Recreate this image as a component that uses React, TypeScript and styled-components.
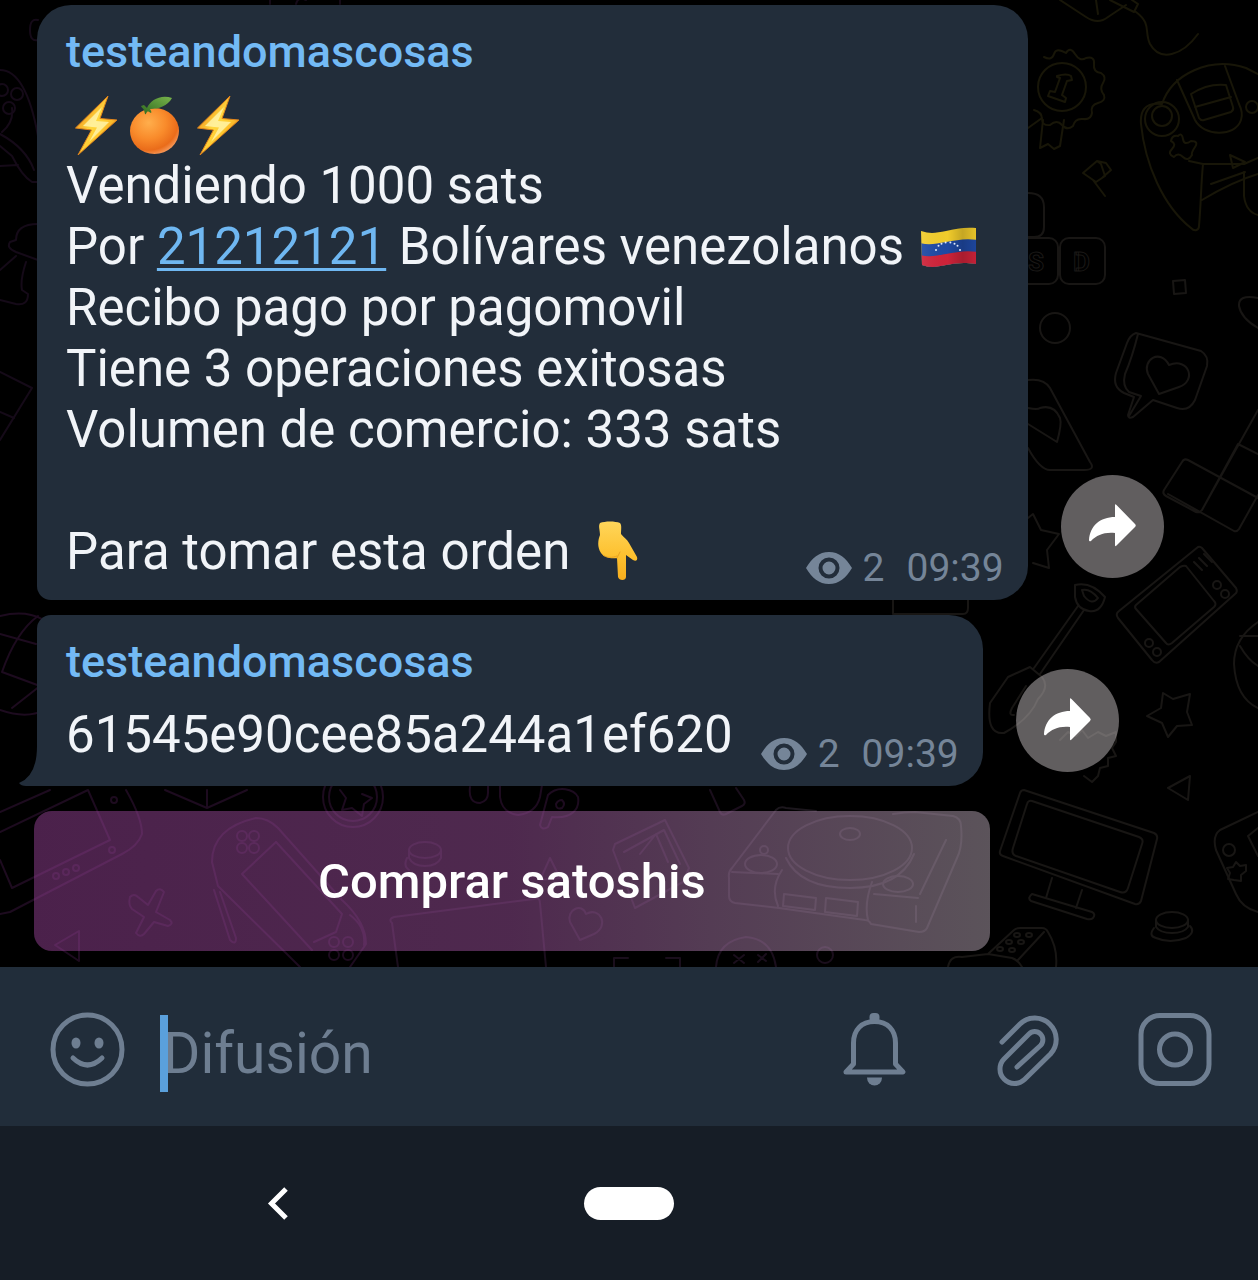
import React from "react";
import styled, { createGlobalStyle, css } from "styled-components";

const color = {
  bubble: "#222d3a",
  text: "#f1f4f8",
  name: "#73baf5",
  link: "#6fb7f1",
  muted: "#758598",
  icon: "#6e7e91",
  composer: "#212d3a",
  caret: "#5aa0dc",
  nav: "#161d26",
};

const GlobalStyle = createGlobalStyle`
  * { box-sizing: border-box; }
  body {
    margin: 0;
    background: #000;
    font-family: Roboto, "Noto Sans", sans-serif;
    color: ${color.text};
  }
  button, input { font: inherit; color: inherit; }
`;

const Screen = styled.div`
  min-height: 100vh;
  display: flex;
  flex-direction: column;
  background: #000;
`;

const Chat = styled.main`
  position: relative;
  flex: 1;
  display: flex;
  flex-direction: column;
  justify-content: flex-end;
  padding: 5px 34px 16px;
  overflow: hidden;
`;

const WallpaperArt = styled.svg`
  position: absolute;
  left: 0;
  bottom: 0;
  width: 1258px;
  height: 967px;
  fill: none;
  stroke-width: 2;
  stroke-linejoin: round;
  stroke-linecap: round;
  pointer-events: none;
`;

const MessageRow = styled.div<{ $gap: number }>`
  position: relative;
  display: flex;
  align-items: flex-end;
  gap: 33px;
  padding-left: 3px;
  margin-bottom: ${(p) => p.$gap}px;
`;

const Bubble = styled.article<{ $tail?: boolean }>`
  position: relative;
  padding: 20px 24px 10px 29px;
  background: ${color.bubble};
  border-radius: 34px 34px 34px 14px;
  ${(p) =>
    p.$tail &&
    css`
      border-radius: 14px 34px 34px 0;
    `}
`;

const Tail = styled.svg`
  position: absolute;
  left: -18px;
  bottom: 0;
  width: 20px;
  height: 40px;
  fill: ${color.bubble};
`;

const Sender = styled.h2`
  margin: 0 0 15px;
  font-size: 45px;
  line-height: 54px;
  font-weight: 500;
  color: ${color.name};
`;

const Line = styled.p`
  margin: 0;
  min-height: 61px;
  padding-right: 26px;
  font-size: 51px;
  line-height: 61px;
  white-space: pre-wrap;
`;

const LastRow = styled.div`
  display: flex;
  justify-content: space-between;
  align-items: flex-end;
  gap: 8px;
`;

const LastLine = styled(Line)<{ $below: number }>`
  padding-right: 20px;
  margin-bottom: ${(p) => p.$below}px;
`;

const Amount = styled.a`
  color: ${color.link};
  text-decoration: underline;
  text-decoration-thickness: 3px;
  text-underline-offset: 4px;
  text-decoration-skip-ink: none;
`;

const Meta = styled.div`
  display: flex;
  align-items: center;
  font-size: 39px;
  line-height: 44px;
  color: ${color.muted};
`;

const Views = styled.span`
  margin: 0 22px 0 11px;
`;

const EyeArt = styled.svg`
  width: 46px;
  height: 32px;
  fill: ${color.muted};
`;

const EmojiArt = styled.svg`
  display: inline-block;
  width: 61px;
  height: 61px;
  vertical-align: top;
`;

const ShareButton = styled.button<{ $lift: number }>`
  flex: none;
  width: 103px;
  height: 103px;
  margin: 0 0 ${(p) => p.$lift}px;
  padding: 0;
  border: 0;
  border-radius: 50%;
  background: rgba(194, 188, 190, 0.5);
  cursor: pointer;

  svg {
    display: block;
    fill: #fff;
  }
`;

const KeyboardButton = styled.button`
  position: relative;
  width: 80.3%;
  height: 140px;
  border: 0;
  border-radius: 18px;
  font-size: 49px;
  font-weight: 500;
  color: #fff;
  background: linear-gradient(
    90deg,
    rgba(150, 66, 150, 0.5) 0%,
    rgba(156, 82, 156, 0.5) 50%,
    rgba(168, 122, 168, 0.5) 72%,
    rgba(182, 166, 180, 0.5) 100%
  );
  cursor: pointer;
`;

const Composer = styled.form`
  display: flex;
  align-items: center;
  height: 159px;
  padding: 10px 46px 0 50px;
  background: ${color.composer};
`;

const Tools = styled.div`
  display: flex;
  align-items: center;
  gap: 78px;
`;

const IconButton = styled.button`
  flex: none;
  display: block;
  padding: 0;
  margin-bottom: 4px;
  border: 0;
  background: none;
  cursor: pointer;

  svg {
    display: block;
    fill: none;
    stroke: ${color.icon};
    stroke-width: 5;
    stroke-linecap: round;
    stroke-linejoin: round;
  }
`;

const Field = styled.label`
  position: relative;
  flex: 1;
  min-width: 0;
  display: flex;
  margin: 4px 0 0 38px;
`;

const Caret = styled.span`
  position: absolute;
  left: -3px;
  top: 0;
  width: 8px;
  height: 77px;
  background: ${color.caret};
`;

const TextInput = styled.input`
  width: 100%;
  height: 77px;
  padding: 0;
  border: 0;
  outline: 0;
  background: none;
  font-size: 57px;
  caret-color: transparent;

  &::placeholder {
    color: ${color.icon};
    opacity: 1;
  }
`;

const SystemNav = styled.nav`
  display: grid;
  grid-template-columns: repeat(3, 1fr);
  place-items: center;
  height: 154px;
  padding: 0 8%;
  background: ${color.nav};
`;

const NavButton = styled.button`
  display: block;
  padding: 0;
  border: 0;
  background: none;
  cursor: pointer;

  svg {
    display: block;
  }
`;

const HomePill = styled(NavButton)`
  width: 90px;
  height: 33px;
  border-radius: 17px;
  background: #fff;
`;

function Bolt() {
  return (
    <EmojiArt viewBox="0 0 61 61" role="img" aria-label="rayo">
      <defs>
        <linearGradient id="bolt" x1="0" y1="0" x2="1" y2="1">
          <stop offset="0.2" stopColor="#f0951c" />
          <stop offset="0.45" stopColor="#ffd83f" />
          <stop offset="0.6" stopColor="#ffc930" />
          <stop offset="0.85" stopColor="#ea8318" />
        </linearGradient>
      </defs>
      <path d="M42 2 9.500 34 25.500 36 12 61 51 26 34 24.500z" fill="url(#bolt)" stroke="#e0841c" strokeWidth="1" />
      <path d="M36 13 17 32 31 33.500 23 48 43 28 30 27z" fill="#fff6b0" opacity="0.8" />
    </EmojiArt>
  );
}

function Tangerine() {
  return (
    <EmojiArt viewBox="0 0 61 61" role="img" aria-label="mandarina">
      <defs>
        <radialGradient id="peel" cx="0.38" cy="0.32" r="0.7">
          <stop offset="0" stopColor="#ffae4c" />
          <stop offset="0.5" stopColor="#f98b2b" />
          <stop offset="0.85" stopColor="#ea6c1a" />
          <stop offset="1" stopColor="#f49352" />
        </radialGradient>
        <linearGradient id="leaf" x1="0" y1="1" x2="1" y2="0">
          <stop offset="0" stopColor="#2f6a1e" />
          <stop offset="1" stopColor="#79b44c" />
        </linearGradient>
      </defs>
      <ellipse cx="27.500" cy="37" rx="24.500" ry="23" fill="url(#peel)" />
      <path d="M17 16c-1-2-3-3-3-4l3-1 3 3c3-8 14-14 25-10-4 8-14 11-22 11 1 2 2 3 1 4-2-1-3-2-4-1s-1 3-2 2z" fill="url(#leaf)" />
    </EmojiArt>
  );
}

function Flag() {
  const stars = [-12, -9.5, -6.5, -2.4, 2.4, 6.5, 9.5, 12];
  return (
    <EmojiArt viewBox="0 0 61 61" role="img" aria-label="bandera de Venezuela">
      <defs>
        <clipPath id="cloth">
          <path d="M4 15c9 3 15 2 25 0s18-4 30-3v36c-12-2-20-1-30 1s-16 3-24 0z" />
        </clipPath>
        <linearGradient id="fold" x1="0" x2="1">
          <stop offset="0" stopColor="#fff" stopOpacity="0.1" />
          <stop offset="0.5" stopColor="#000" stopOpacity="0.02" />
          <stop offset="0.75" stopColor="#000" stopOpacity="0.2" />
          <stop offset="1" stopColor="#000" stopOpacity="0.05" />
        </linearGradient>
      </defs>
      <g clipPath="url(#cloth)">
        <path d="M0 8h61v44H0z" fill="#f6d02c" />
        <path d="M0 26c10 4 18 2 29 0s20-4 32-2v30H0z" fill="#1f4aa6" />
        <path d="M0 38c10 4 18 2 29 0s20-4 32-2v20H0z" fill="#d2233a" />
        <path d="M0 8h61v44H0z" fill="url(#fold)" />
      </g>
      <g fill="#dfe8f8">
        {stars.map((x) => (
          <circle key={x} cx={31 + x} cy={36 - Math.sqrt(150 - x * x) * 0.8} r="1" />
        ))}
      </g>
    </EmojiArt>
  );
}

function PointDown() {
  return (
    <EmojiArt viewBox="0 0 61 61" role="img" aria-label="mano apuntando abajo">
      <defs>
        <linearGradient id="skin" x1="0" y1="0" x2="0" y2="1">
          <stop offset="0" stopColor="#ffd65a" />
          <stop offset="0.6" stopColor="#fdc02e" />
          <stop offset="1" stopColor="#f6ad1e" />
        </linearGradient>
      </defs>
      <path
        d="M17 2c5-2 15-2 20 0 2 2 1 7 1 11 3 4 6 5 8 9l8 14c1 3-1 5-4 3l-7-5v22c0 4-7 4-8 0l-1-19c-7 1-13-1-16-5-4-6-3-13-1-18 0-5-2-9 0-12z"
        fill="url(#skin)"
      />
      <path d="M20 34c3 3 9 3 14 1M34 37l3-6" fill="none" stroke="#e9a422" strokeWidth="1" strokeLinecap="round" />
    </EmojiArt>
  );
}

function MessageMeta() {
  return (
    <Meta>
      <EyeArt viewBox="0 0 46 32" role="img" aria-label="Vistas">
        <path
          fillRule="evenodd"
          d="M0 16C6 6 13 0 23 0s17 6 23 16c-6 10-13 16-23 16S6 26 0 16zM23 5.500a10.500 10.500 0 1 0 0 21 10.500 10.500 0 0 0 0-21zM23 9.500a6.500 6.500 0 1 1 0 13 6.500 6.500 0 0 1 0-13z"
        />
      </EyeArt>
      <Views>2</Views>
      <time dateTime="09:39">09:39</time>
    </Meta>
  );
}

function Share({ lift }: { lift: number }) {
  return (
    <ShareButton type="button" aria-label="Compartir" $lift={lift}>
      <svg width="103" height="103" viewBox="0 0 103 103">
        <path d="M54 30.500q0-2 1.500-.5L74 49q1.500 1.500 0 3L55.500 70.500q-1.500 1.500-1.500-.5V58c-11-1-18 2-24 8q-2 1-2-1c1-14 11-23 26-23z" />
      </svg>
    </ShareButton>
  );
}

function Wallpaper() {
  return (
    <WallpaperArt viewBox="0 0 1258 967" aria-hidden="true">
      <g stroke="#181608">
        <path d="M1060 0l26 17q12 8 22 0l18-12M1096 0l2 14M1110 0l24 12 4-8-6-4M1136 12c16 12 8 20 14 32 10 18 32 12 48-10" />
        <path d="M1044 57q8 4 10-3t12-1q4-7 9 1t11 4q9-2 8 6t7 9q6 4 2 10t1 12q2 6-6 8t-6 10q-1 7-9 6t-10 7q-6 5-11-1t-12 0q-8 1-8-6t-8-9" />
        <circle cx="1062" cy="87" r="24" />
        <path d="M1057 76q10-3 14 0l1 4-5 1-5 14 4 3-1 4-17-6 2-5 5 1 5-14-3-1zM1043 120l-3 28 8-4 6 5 6-3 4-26M1028 128l14-10" />
        <path d="M1083 173l14-12 4 3 4 12-9 6zM1097 161l9 2 5 7-8 7M1093 180l12 16" />
        <path d="M1162 104c10-30 48-48 84-36l12 6M1162 104c-18-2-22 8-21 20 4 40 22 82 50 104 4 4 8 2 8-2 2-22 2-42 4-62l-14-3M1204 164l40 0 14-6M1202 200c20-12 36-20 56-26M1211 184l34-12" />
        <circle cx="1162" cy="119" r="17" />
        <circle cx="1162" cy="116" r="10" />
        <path d="M1177 80l18 40c8 16 40 18 46 0 2-6 0-12-2-16l-14-38M1191 94l8 24q2 3 5 2l27-8q3-2 2-5l-7-22q-18-2-35 9zM1195 107l36-10" />
        <path d="M1178 136q4-4 5 3t8 2q8 0 4 6t-3 8q-4 7-9 2t-9 0q-7-3-2-8t-1-8q1-6 7-5zM1230 155l3 13 12-6zM1244 172v24q2 16 14 19" />
        <circle cx="1252" cy="107" r="6" />
      </g>
      <g stroke="#181614">
        <path d="M1028 193q16 0 16 14v20q0 10-10 10h-6" />
        <rect x="1014" y="238" width="44" height="46" rx="9" />
        <rect x="1060" y="238" width="45" height="46" rx="9" />
        <path d="M1173 281l12-1 1 13-12 1zM1258 298q-20-4-19 8 2 12 19 22" />
        <circle cx="1055" cy="328" r="15" />
        <path d="M1136 333q-6 2-9 10l-11 30q-4 14 8 20l10 4-6 18q0 4 5 2l20-17 24 8q12 4 18-8l12-34q2-10-6-15zM1138 334q-6 24-13 40-3 12 4 18l12 4-12 20" />
        <path d="M1159 394l-11-20c-6-14 12-26 21-9 20-8 28 16 10 22z" />
        <path d="M1028 380q16-2 22 8l40 74q6 8-6 8h-34q-10 0-22-22M1028 408q10 2 12 0 14-4 20 10 2 6-3 24l-29-18" />
        <path d="M1258 410l-56 100q-2 3-6 2l-30-16q-4-2-2-6l18-28q2-4 6-2l70 38M1238 444l20 10M1202 510l36-66M1168 494l66 37q3 1 5-2l19-34" />
        <path d="M1028 518l5-4 8 16 18 4-12 16 2 18-16-5" />
        <path d="M1075 585q16-4 30 12-4 16-16 14t-14-14zM1082 590q8-2 16 8-6 8-14-2zM1084 610l-44 64M1078 606l-44 62M1030 667l12 10q8 10-4 22-8 20-34 34-18 2-14-30l18-26zM1026 686l-14 22q-4 8 2 7" />
        <path d="M1198 547q2-1 4 1l34 40q2 4-1 6l-76 68q-4 2-7-2l-34-42q-3-4 1-7zM1186 566q-2-1-6 1l-44 38q-2 2 0 4l30 34q2 3 6 0l42-36q3-3 0-6z" />
        <circle cx="1217" cy="585" r="4" />
        <circle cx="1225" cy="594" r="4" />
        <circle cx="1149" cy="643" r="4" />
        <circle cx="1157" cy="652" r="4" />
        <path d="M1194 562l8 8M1199 558l8 8M1204 554l8 8M1258 622q-24 16-24 42 2 34 24 44M1240 636h18M1240 646q8 14 18 20" />
        <path d="M1163 693l10 6 17-5-3 18 5 13-15 1-9 11-6-14-15-7 14-8zM1190 776l-22 12 20 12z" />
        <path d="M1060 740l8-8 8 4 6-6 6 8 10-6 8 4 10-4 0 10-4 6 4 8-8 2 0 8-8 2-2 8-6 6-8-6" />
        <path d="M1024 790q-3 0-4 3l-20 58q-1 4 3 5l132 48q4 1 6-3l16-62q1-4-3-6zM1032 801q-4-1-5 3l-14 44q-2 6 3 8l104 36q6 2 8-4l14-44q2-5-3-7zM1052 878l-6 20M1082 890l-6 18M1032 894l60 18q4 2 1 6-2 2-6 1l-56-18q-4-3 1-7z" />
        <path d="M1258 812l-38 18q-8 6-4 20l20 44q6 14 22 18M1258 828l-10 8 10 20" />
        <circle cx="1229" cy="850" r="6" />
        <path d="M1236 862l4 4 6-1 0 6-5 4 0 6-7-1-6-1 2-6-3-5 6-1z" />
        <ellipse cx="1172" cy="920" rx="16" ry="8" />
        <path d="M1156 920v7q4 6 16 6t16-6v-7M1154 928q-6 8 2 10 14 6 30 0 10-6 4-12" />
        <path d="M988 954l26-24q2-2 6-2h22q4 0 6 4 10 16 8 35M988 954l24 4q6 2 10 9M948 967q2-12 14-10l26-3M1018 960l26-28" />
        <ellipse cx="1017" cy="935" rx="3" ry="2" />
        <ellipse cx="1029" cy="935" rx="3" ry="2" />
        <ellipse cx="1009" cy="942" rx="3" ry="2" />
        <ellipse cx="1021" cy="942" rx="3" ry="2" />
        <ellipse cx="1000" cy="949" rx="3" ry="2" />
        <ellipse cx="1012" cy="950" rx="3" ry="2" />
        <path d="M893 600v14h70q5 0 5-6v-8" />
      </g>
      <g stroke="#1c171d">
        <path d="M776 810q4-4 10-2l30 3M776 810l-44 58q-4 4-3 10v18q0 6 6 7l44 5 86 12q4 0 6 4l48 8q6 0 8-4l30-70q6-12 4-32 0-8-8-10l-38-4q-10 0-22 2M732 872l46 2M778 906q-8-18 4-36M868 920q-4-16 4-38M874 894l44 4M916 922v-16M946 840l-26 54" />
        <ellipse cx="850" cy="848" rx="62" ry="32" />
        <path d="M786 858q14 30 64 30t64-34" />
        <ellipse cx="850" cy="834" rx="10" ry="6" />
        <ellipse cx="761" cy="864" rx="16" ry="9" />
        <ellipse cx="898" cy="884" rx="15" ry="8" />
        <circle cx="764" cy="850" r="4" />
        <path d="M784 894l32 4-1 12-32-4zM826 898l32 4-1 14-32-4z" />
      </g>
      <g stroke="#1a0e1c">
        <path d="M710 790l10 22q2 4 6 2l16-8q4-2 2-6l-8-12M613 850l2-6 50-24 24 48-6 14-48 26zM624 852l40-22 16 34M640 854l16-20 12 28" />
        <path d="M580 940l-10-18c-4-12 12-20 16-8 14-8 24 12 8 20z" />
        <path d="M392 923q-4-4 2-6l140-18q6-2 6 4l6 64M392 923l6 44M614 967v-9h14M666 958h14v9" />
        <path d="M716 967q2-26 30-30 26 2 30 30M734 955l10 8M744 955l-10 8M758 955l8 6M766 954l-8 8" />
        <circle cx="825" cy="955" r="8" />
        <ellipse cx="425" cy="850" rx="16" ry="8" />
        <path d="M409 850v8q4 8 16 8t16-8v-8M407 858q-4 8 2 12M550 858l10 20-20 2z" />
      </g>
      <g stroke="#1d0b1f">
        <circle cx="353" cy="797" r="30" />
        <circle cx="353" cy="797" r="24" />
        <path d="M340 790l6 8-4 12 10-2 10 8 2-12 8-6-10-4M165 790l42 18 40-18M207 790v18" />
        <path d="M470 787q-2 16 10 16 8-2 8-10v-8M500 785v12q2 16 18 18 18-2 22-18l2-12M548 795l-8 30q2 6 8 2l4-10c20 2 28-8 26-20-4-8-20-12-30-2zM562 800q4 4 0 8-6 2-6-4 2-4 6-4z" />
        <path d="M212 862q0-34 44-44 12 0 22 10l64 72q24 22 24 44l-16 23M212 862l6 24 82 81M276 842l-34 32 70 76M276 842l66 72-6 18-22 10M214 890l16 50q6 6 6-2l-16-46M350 915q16 12 14 30" />
        <circle cx="242" cy="836" r="5" />
        <circle cx="254" cy="836" r="5" />
        <circle cx="242" cy="848" r="5" />
        <circle cx="254" cy="848" r="5" />
        <circle cx="334" cy="942" r="5" />
        <circle cx="348" cy="942" r="5" />
        <circle cx="334" cy="955" r="5" />
        <circle cx="348" cy="955" r="5" />
        <path d="M130 897q4-4 8 0l10 8 8-14q4-4 8 1l-8 20 14 8q4 4-2 6l-14-4-10 12q-4 4-8-1l8-16-12-8q-4-4-2-12zM55 945l24-14v30z" />
        <path d="M0 832l88-42 22 50L12 888 0 860M0 812l50-22M126 790q16 28 16 44-4 12-20 20L10 912l-10 2" />
        <circle cx="114" cy="800" r="3" />
        <circle cx="112" cy="850" r="3" />
        <circle cx="56" cy="876" r="3" />
        <circle cx="66" cy="872" r="3" />
        <circle cx="76" cy="868" r="3" />
        <path d="M0 616q40-10 60 20v60q-20 28-60 14M0 634l36 10M12 708l28-22-38-14q14-40 36-56" />
      </g>
      <g stroke="#150a18">
        <path d="M0 70q26 0 38 66M2 132q12-10 10-24M0 134q26 14 34 36M0 146l12 10q10 20 20 26h8M0 166l18-1M38 224q-22 0-22 16l-6 2q-4 6 6 10l22 8M0 270l16-14M26 262q-6 18-4 28l6 4q0 12-12 10L0 300" />
        <circle cx="17" cy="94" r="6" />
        <circle cx="9" cy="108" r="6" />
        <circle cx="2" cy="90" r="6" />
        <path d="M0 372l32 16L0 440M0 412l14 6M38 20q-8-2-8 10t8 10M270 0v4M296 4q2-8 10-4M340 0v4" />
      </g>
      <g fontFamily="Roboto, sans-serif" fontWeight="700" fontSize="26" stroke="#1b1917" strokeWidth="1">
        <text x="1028" y="271">S</text>
        <text x="1073" y="271">D</text>
      </g>
    </WallpaperArt>
  );
}

export default function App() {
  return (
    <Screen>
      <GlobalStyle />
      <Chat>
        <Wallpaper />
        <MessageRow $gap={15}>
          <Bubble>
            <Sender>testeandomascosas</Sender>
            <Line>
              <Bolt />
              <Tangerine />
              <Bolt />
            </Line>
            <Line>Vendiendo 1000 sats</Line>
            <Line>
              Por <Amount href="#21212121">21212121</Amount> Bolívares venezolanos <Flag />
            </Line>
            <Line>Recibo pago por pagomovil</Line>
            <Line>Tiene 3 operaciones exitosas</Line>
            <Line>Volumen de comercio: 333 sats</Line>
            <Line />
            <LastRow>
              <LastLine $below={8}>
                Para tomar esta orden <PointDown />
              </LastLine>
              <MessageMeta />
            </LastRow>
          </Bubble>
          <Share lift={22} />
        </MessageRow>
        <MessageRow $gap={25}>
          <Bubble $tail>
            <Tail viewBox="0 0 20 40" aria-hidden="true">
              <path d="M20 0v40H7q-5 0-7-3Q18 30 18 0z" />
            </Tail>
            <Sender>testeandomascosas</Sender>
            <LastRow>
              <LastLine $below={11}>61545e90cee85a244a1ef620</LastLine>
              <MessageMeta />
            </LastRow>
          </Bubble>
          <Share lift={14} />
        </MessageRow>
        <KeyboardButton type="button">Comprar satoshis</KeyboardButton>
      </Chat>

      <Composer onSubmit={(e) => e.preventDefault()}>
        <IconButton type="button" aria-label="Emojis">
          <svg width="75" height="75" viewBox="0 0 75 75">
            <circle cx="37.500" cy="37.500" r="34.500" />
            <ellipse cx="26" cy="31" rx="4.500" ry="5.500" fill={color.icon} stroke="none" />
            <ellipse cx="49" cy="31" rx="4.500" ry="5.500" fill={color.icon} stroke="none" />
            <path d="M23 46q14.500 14 29 0" />
          </svg>
        </IconButton>
        <Field>
          <TextInput type="text" placeholder="Difusión" aria-label="Difusión" />
          <Caret />
        </Field>
        <Tools>
          <IconButton type="button" aria-label="Notificaciones">
            <svg width="88" height="75" viewBox="0 0 88 75">
              <path d="M23.500 52V31c0-13 8-21.500 21-21.500s21 8.500 21 21.500v21l7.500 8H16z" />
              <rect x="39.500" y="1" width="10" height="9" rx="4" fill={color.icon} stroke="none" />
              <path d="M37 65.500h15a7.500 8 0 0 1-15 0z" fill={color.icon} stroke="none" />
            </svg>
          </IconButton>
          <IconButton type="button" aria-label="Adjuntar">
            <svg width="64" height="75" viewBox="0 0 64 75">
              <path d="M6 30 24 12A21.400 21.400 0 0 1 54.500 42L28.500 67.500A14.500 14.500 0 0 1 8 47L33 22A8 8 0 0 1 44.500 33.500L21 55" />
            </svg>
          </IconButton>
          <IconButton type="button" aria-label="Cámara">
            <svg width="74" height="75" viewBox="0 0 74 75">
              <rect x="3" y="3.500" width="68" height="68" rx="19" />
              <circle cx="37" cy="37.500" r="15.500" />
            </svg>
          </IconButton>
        </Tools>
      </Composer>

      <SystemNav>
        <NavButton type="button" aria-label="Atrás">
          <svg width="22" height="34" viewBox="0 0 22 34">
            <path d="M20 3 5.500 17.500 20 32" fill="none" stroke="#fff" strokeWidth="5" />
          </svg>
        </NavButton>
        <HomePill type="button" aria-label="Inicio" />
      </SystemNav>
    </Screen>
  );
}
